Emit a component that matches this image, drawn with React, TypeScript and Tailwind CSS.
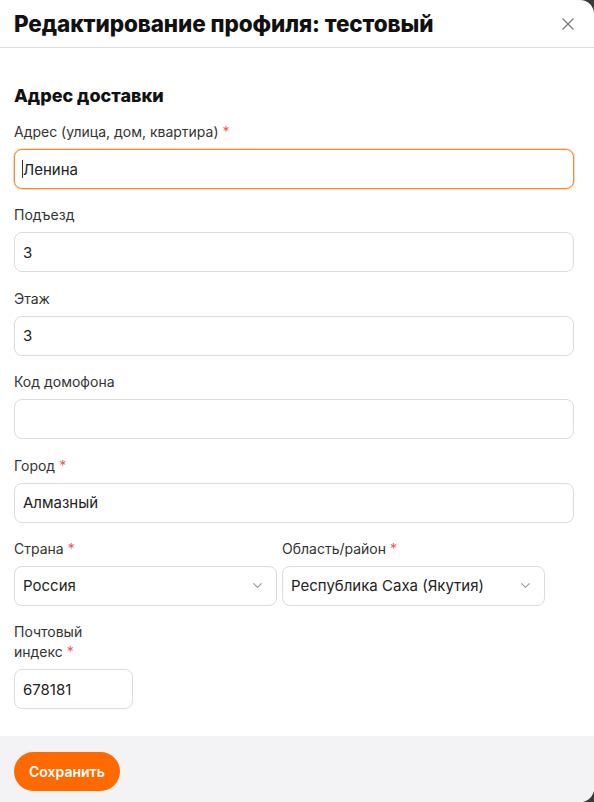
import { ChevronDown, X } from "lucide-react";

type FieldProps = {
  label: React.ReactNode;
  value: string;
  required?: boolean;
  focused?: boolean;
  className?: string;
};

const Star = () => <span className="text-[#ea5a5a] ml-1">*</span>;

const Field = ({ label, value, required, focused, className }: FieldProps) => (
  <div className={className ?? "flex flex-col"}>
    <label className="text-[14px] leading-5 text-[#333] mb-[7px]">
      {label}
      {required && <Star />}
    </label>
    <div className="relative">
      <input
        readOnly
        value={value}
        className={
          focused
            ? "w-full h-10 px-[8px] rounded-lg border border-[#ef8a35] shadow-[0_0_0_1px_#fbd9b8] text-[15px] text-[#222] outline-none bg-white"
            : "w-full h-10 px-[8px] rounded-lg border border-[#dcdcdc] text-[15px] text-[#222] outline-none bg-white"
        }
      />
      {focused && (
        <span className="absolute left-[8px] top-[11px] h-[18px] w-px bg-[#333]" />
      )}
    </div>
  </div>
);

const SelectField = ({ label, value }: { label: string; value: string }) => (
  <div className="flex flex-col w-[263px]">
    <label className="text-[14px] leading-5 text-[#333] mb-[7px]">
      {label}
      <Star />
    </label>
    <div className="h-10 pl-[8px] pr-[11px] rounded-lg border border-[#dcdcdc] flex items-center justify-between text-[15px] text-[#222] bg-white">
      <span>{value}</span>
      <ChevronDown size={15} strokeWidth={1.75} className="text-[#9a9a9a]" />
    </div>
  </div>
);

const App = () => {
  return (
    <div
      className="w-[594px] h-[802px] bg-[#3a3a3a] overflow-hidden"
      style={{ fontFamily: "Inter, 'Noto Sans', sans-serif" }}
    >
      <div className="bg-white h-full rounded-r-[14px] overflow-hidden flex flex-col">
        {/* шапка */}
        <div className="h-[48px] border-b border-[#dedede] flex items-center justify-between pl-[14px] pr-[16px]">
          <div className="text-[22.5px] font-extrabold text-[#111] tracking-[-0.1px]">
            Редактирование профиля: тестовый
          </div>
          <X size={20} strokeWidth={1.5} className="text-[#7a7a7a]" />
        </div>

        {/* форма */}
        <div className="pl-[14px] pr-[20px] pt-[36px] pb-[27px] flex flex-col">
          <div className="text-[18px] leading-6 font-extrabold text-[#111] mb-[14px]">
            Адрес доставки
          </div>
          <div className="flex flex-col gap-[16.4px]">
            <Field
              label="Адрес (улица, дом, квартира)"
              value="Ленина"
              required
              focused
            />
            <Field label="Подъезд" value="3" />
            <Field label="Этаж" value="3" />
            <Field label="Код домофона" value="" />
            <Field label="Город" value="Алмазный" required />
            <div className="flex gap-[5px]">
              <SelectField label="Страна" value="Россия" />
              <SelectField label="Область/район" value="Республика Саха (Якутия)" />
            </div>
            <Field
              className="flex flex-col w-[119px]"
              label={
                <>
                  Почтовый
                  <br />
                  индекс
                </>
              }
              value="678181"
              required
            />
          </div>
        </div>

        {/* футер */}
        <div className="flex-1 bg-[#f3f3f5] px-[14px] pt-[16px]">
          <button className="h-[39px] px-[15px] rounded-full bg-[#ff6a00] text-white text-[14px] font-semibold">
            Сохранить
          </button>
        </div>
      </div>
    </div>
  );
};

export default App;
